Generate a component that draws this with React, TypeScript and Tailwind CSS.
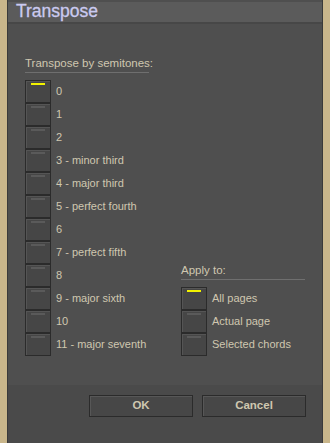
const semitones = [
  "0",
  "1",
  "2",
  "3 - minor third",
  "4 - major third",
  "5 - perfect fourth",
  "6",
  "7 - perfect fifth",
  "8",
  "9 - major sixth",
  "10",
  "11 - major seventh",
];

const applyTo = ["All pages", "Actual page", "Selected chords"];

const Toggle = ({ label, on }: { label: string; on?: boolean }) => {
  return (
    <div className="flex items-center h-[23px]">
      <div className="shrink-0 w-[26px] h-[23px] border border-[#2b2b2b] bg-[#464646] flex justify-center shadow-[inset_1px_1px_0_#555]">
        <div className={on ? "mt-[2px] w-[14px] h-[2px] bg-[#f2f200]" : "mt-[2px] w-[14px] h-[2px] bg-[#5a5a5a]"}></div>
      </div>
      <span className="ml-[5px] whitespace-nowrap text-[11px] text-[#cfc7b0]">{label}</span>
    </div>
  );
};

const App = () => {
  return (
    <div className="w-[330px] h-[443px] flex bg-[#c9b68b] font-['Liberation_Sans',sans-serif]">
      <div className="ml-[7px] w-[316px] h-full flex flex-col bg-[#4f4f4f] border-x border-[#3a3a3a]">
        <div className="mt-[2px] h-[22px] bg-[#5b5b5b] border-b-2 border-[#474747] flex items-center pl-[8px]">
          <span className="text-[17.5px] leading-none text-[#cacaf0] [-webkit-text-stroke:0.3px_#cacaf0]">Transpose</span>
        </div>

        <div className="flex-1 flex pl-[17px] pt-[32px]">
          <div className="w-[124px]">
            <div className="whitespace-nowrap text-[11.5px] leading-[14px] text-[#cfc7b0] pb-[2px] border-b border-[#6f6f6f]">Transpose by semitones:</div>
            <div className="mt-[7px] flex flex-col">
              {semitones.map((s, i) => (
                <Toggle key={s} label={s} on={i === 0} />
              ))}
            </div>
          </div>

          <div className="ml-[32px] w-[124px] mt-[207px]">
            <div className="whitespace-nowrap text-[11.5px] leading-[14px] text-[#cfc7b0] pb-[2px] border-b border-[#6f6f6f]">Apply to:</div>
            <div className="mt-[7px] flex flex-col">
              {applyTo.map((s, i) => (
                <Toggle key={s} label={s} on={i === 0} />
              ))}
            </div>
          </div>
        </div>

        <div className="h-[58px] bg-[#4a4a4a] flex justify-end gap-[9px] pr-[16px] pt-[10px]">
          <button className="w-[104px] h-[22px] border border-[#2b2b2b] bg-[#474747] shadow-[inset_1px_1px_0_#575757] text-[11.5px] font-bold text-[#cfc7b0]">
            OK
          </button>
          <button className="w-[104px] h-[22px] border border-[#2b2b2b] bg-[#474747] shadow-[inset_1px_1px_0_#575757] text-[11.5px] font-bold text-[#cfc7b0]">
            Cancel
          </button>
        </div>
      </div>
    </div>
  );
};

export default App;
